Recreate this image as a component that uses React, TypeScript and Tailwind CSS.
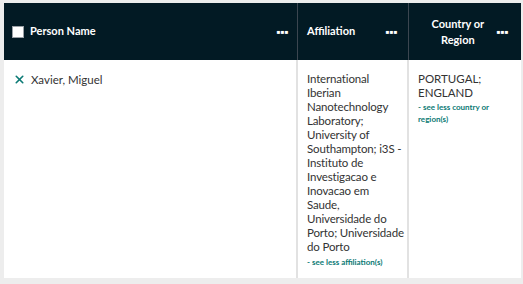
import { X } from 'lucide-react';

const font = { fontFamily: 'Lato, "Noto Sans", sans-serif' };

const affiliation = [
  'International',
  'Iberian',
  'Nanotechnology',
  'Laboratory;',
  'University of',
  'Southampton; i3S -',
  'Instituto de',
  'Investigacao e',
  'Inovacao em',
  'Saude,',
  'Universidade do',
  'Porto; Universidade',
  'do Porto',
];

function Dots() {
  return <span className="text-white font-bold text-[6px] leading-none tracking-[0.5px]">■■■</span>;
}

export default function App() {
  return (
    <div className="w-[523px] h-[284px] bg-[#ededed] pl-[4px] pt-[3px] pr-[2px]" style={font}>
      <div className="bg-white h-[275px] flex flex-col overflow-hidden">

        {/* ── Header ── */}
        <div className="flex shrink-0 h-[57px] bg-[#021a24] text-white">
          <div className="w-[294px] flex items-center pl-[8px] pr-[8px] border-r border-[#3b4650]">
            <span className="w-[12px] h-[12px] bg-white border border-[#9aa0a6] mr-[6px]" />
            <span className="font-bold text-[11px] flex-1">Person Name</span>
            <Dots />
          </div>
          <div className="w-[111px] flex items-center pl-[9px] pr-[10px] border-r border-[#3b4650]">
            <span className="font-bold text-[11px] flex-1">Affiliation</span>
            <Dots />
          </div>
          <div className="flex-1 flex items-center pl-[10px] pr-[12px]">
            <span className="font-bold text-[11px] flex-1 text-center leading-[16px]">Country or<br />Region</span>
            <Dots />
          </div>
        </div>

        {/* ── Row ── */}
        <div className="flex flex-1">
          <div className="w-[294px] pl-[9px] pt-[11px] border-r-2 border-[#e2e2e2]">
            <div className="flex items-center gap-[5px] text-[11.5px] text-[#333]">
              <X className="w-[13px] h-[13px] text-[#0b7a75]" strokeWidth={3} />
              Xavier, Miguel
            </div>
          </div>
          <div className="w-[111px] pl-[9px] pt-[12px] border-r-2 border-[#e2e2e2] text-[11.5px] leading-[14px] text-[#333] whitespace-nowrap tracking-[-0.15px]">
            {affiliation.map(l => (
              <div key={l}>{l}</div>
            ))}
            <div className="text-[8px] font-bold text-[#0b7a75] mt-[1px] tracking-normal">- see less affiliation(s)</div>
          </div>
          <div className="flex-1 pl-[9px] pr-[6px] pt-[12px] text-[11.5px] leading-[14px] text-[#333]">
            PORTUGAL;<br />ENGLAND
            <div className="text-[8px] font-bold text-[#0b7a75] leading-[12px] mt-[1px]">- see less country or<br />region(s)</div>
          </div>
        </div>

      </div>
    </div>
  );
}
